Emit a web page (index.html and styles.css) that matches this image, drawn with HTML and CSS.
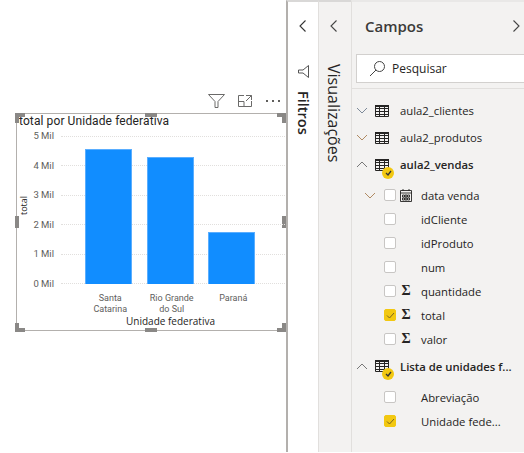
FILE: index.html
```html
<!DOCTYPE html>
<html>

<head>
    <meta charset="utf-8" />
    <title>Campos</title>
    <link rel="stylesheet" href="styles.css">
</head>

<body>

<div class="app">
    <div class="canvas">
        <div class="tools">
            <svg width="17" height="14" viewBox="0 0 17 14"><path d="M.5.500h16L10 7.500v6H7v-6z" fill="none" stroke="#6b6a69"/></svg>
            <svg width="14" height="12" viewBox="0 0 14 12"><path d="M6 .5H.5v11h13V6M.5 6.500H6v5M8 .5h5.500V5M13.500 .5L8 6" fill="none" stroke="#6b6a69"/></svg>
            <div class="dots"><span></span><span></span><span></span></div>
        </div>
        <div class="visual">
            <i class="hd h1"></i><i class="hd h2"></i><i class="hd h3"></i><i class="hd h4"></i>
            <i class="hd h5"></i><i class="hd h6"></i><i class="hd h7"></i><i class="hd h8"></i>
            <i class="hd mt"></i><i class="hd mb"></i><i class="hd ml"></i><i class="hd mr"></i>
            <div class="vtitle">total por Unidade federativa</div>
            <div class="plot">
                <div class="ytitle">total</div>
                <div class="yaxis">
                    <span>5 Mil</span><span>4 Mil</span><span>3 Mil</span><span>2 Mil</span><span>1 Mil</span><span>0 Mil</span>
                </div>
                <div class="bars">
                    <div class="grid"><i></i><i></i><i></i><i></i><i></i><i></i></div>
                    <div class="bar" style="height: 135px"></div>
                    <div class="bar" style="height: 127px"></div>
                    <div class="bar" style="height: 52px"></div>
                </div>
            </div>
            <div class="xaxis">
                <span>Santa<br>Catarina</span><span>Rio Grande<br>do Sul</span><span>Paraná</span>
            </div>
            <div class="xtitle">Unidade federativa</div>
        </div>
    </div>

    <div class="side filtros">
        <svg class="chev" width="7" height="12" viewBox="0 0 7 12"><path d="M6.500.5L1 6l5.500 5.500" fill="none" stroke="#333" stroke-width="1.100"/></svg>
        <svg class="funnel" width="11" height="13" viewBox="0 0 11 13"><path d="M10.500.5v12L5 8H.5V5H5z" fill="none" stroke="#555"/></svg>
        <div class="vtext bold">Filtros</div>
    </div>

    <div class="side viz">
        <svg class="chev" width="7" height="12" viewBox="0 0 7 12"><path d="M6.500.5L1 6l5.500 5.500" fill="none" stroke="#444" stroke-width="1.100"/></svg>
        <div class="vtext">Visualizações</div>
    </div>

    <div class="campos">
        <div class="chead">
            <span class="ctitle">Campos</span>
            <svg width="7" height="12" viewBox="0 0 7 12"><path d="M.5.5L6 6 .5 11.500" fill="none" stroke="#444" stroke-width="1.100"/></svg>
        </div>
        <div class="search">
            <svg width="17" height="17" viewBox="0 0 17 17"><circle cx="10.500" cy="6.500" r="5" fill="none" stroke="#444"/><path d="M7 10l-6 6" stroke="#444" fill="none"/></svg>
            <span>Pesquisar</span>
        </div>
        <div class="tree">
            <div class="row table h27">
                <svg class="ex" width="12" height="7" viewBox="0 0 12 7"><path d="M1 1l5 5 5-5" fill="none" stroke="#7d8a99"/></svg>
                <svg class="tb" width="14" height="12" viewBox="0 0 14 12"><use href="#tableicon"/></svg>
                <span>aula2_clientes</span>
            </div>
            <div class="row table h27">
                <svg class="ex" width="12" height="7" viewBox="0 0 12 7"><path d="M1 1l5 5 5-5" fill="none" stroke="#b08a62"/></svg>
                <svg class="tb" width="14" height="12" viewBox="0 0 14 12"><use href="#tableicon"/></svg>
                <span>aula2_produtos</span>
            </div>
            <div class="row table h27 vendas">
                <svg class="ex" width="12" height="7" viewBox="0 0 12 7"><path d="M1 6l5-5 5 5" fill="none" stroke="#777"/></svg>
                <div class="tbwrap">
                    <svg class="tb" width="14" height="12" viewBox="0 0 14 12"><use href="#tableicon"/></svg>
                    <div class="badge"><svg width="7" height="6" viewBox="0 0 7 6"><path d="M1 3l2 2 3-4" fill="none" stroke="#333" stroke-width="1.300"/></svg></div>
                </div>
                <span class="bold">aula2_vendas</span>
            </div>
            <div class="row field first">
                <svg class="subex" width="12" height="7" viewBox="0 0 12 7"><path d="M1 1l5 5 5-5" fill="none" stroke="#b08a62"/></svg>
                <div class="check"></div>
                <div class="ficon"><svg width="12" height="13" viewBox="0 0 12 13"><path d="M.5 1.500h11v11H.5zM.5 4h11M3 0v2M9 0v2M2.500 6h2v2h-2zM5 6h2v2H5zM7.500 6h2v2h-2zM2.500 9h2v2h-2zM5 9h2v2H5zM7.500 9h2v2h-2z" fill="none" stroke="#252423" stroke-width=".9"/></svg></div>
                <span>data venda</span>
            </div>
            <div class="row field"><div class="check"></div><div class="ficon"></div><span>idCliente</span></div>
            <div class="row field"><div class="check"></div><div class="ficon"></div><span>idProduto</span></div>
            <div class="row field"><div class="check"></div><div class="ficon"></div><span>num</span></div>
            <div class="row field"><div class="check"></div><div class="ficon sigma">Σ</div><span>quantidade</span></div>
            <div class="row field">
                <div class="check on"><svg width="9" height="7" viewBox="0 0 9 7"><path d="M1 3.500l2.500 2.500L8 1" fill="none" stroke="#7a6520"/></svg></div>
                <div class="ficon sigma">Σ</div><span>total</span>
            </div>
            <div class="row field"><div class="check"></div><div class="ficon sigma">Σ</div><span>valor</span></div>
            <div class="row table h30">
                <svg class="ex" width="12" height="7" viewBox="0 0 12 7"><path d="M1 6l5-5 5 5" fill="none" stroke="#777"/></svg>
                <div class="tbwrap">
                    <svg class="tb" width="14" height="12" viewBox="0 0 14 12"><use href="#tableicon"/></svg>
                    <div class="badge"><svg width="7" height="6" viewBox="0 0 7 6"><path d="M1 3l2 2 3-4" fill="none" stroke="#333" stroke-width="1.300"/></svg></div>
                </div>
                <span class="bold">Lista de unidades f...</span>
            </div>
            <div class="row field"><div class="check"></div><div class="ficon"></div><span>Abreviação</span></div>
            <div class="row field">
                <div class="check on"><svg width="9" height="7" viewBox="0 0 9 7"><path d="M1 3.500l2.500 2.500L8 1" fill="none" stroke="#7a6520"/></svg></div>
                <div class="ficon"></div><span>Unidade fede...</span>
            </div>
        </div>
    </div>
</div>

<svg class="defs" width="0" height="0">
    <symbol id="tableicon" viewBox="0 0 14 12">
        <path d="M.5.500h13v11H.5z" fill="none" stroke="#252423"/>
        <path d="M0 3.500h14M0 6.500h14M0 9.500h14M4.500 2v10M9.500 2v10" stroke="#252423" fill="none"/>
        <path d="M0 0h14v2H0z" fill="#252423"/>
    </symbol>
</svg>

</body>

</html>
```

FILE: styles.css
```css
* {
    padding: 0;
    margin: 0;
    box-sizing: border-box;
}

body {
    width: 524px;
    height: 453px;
    overflow: hidden;
    background: #fff;
    font-family: "Open Sans", "Liberation Sans", sans-serif;
    color: #252423;
}

.app {
    display: flex;
    height: 452px;
}

.defs {
    position: absolute;
}

/* canvas */
.canvas {
    width: 286px;
    flex: none;
    padding: 93px 0 0 16px;
    background: #fff;
}

.tools {
    display: flex;
    justify-content: flex-end;
    align-items: center;
    gap: 13px;
    height: 16px;
    margin-bottom: 4px;
    padding-right: 6px;
    width: 270px;
}

.dots {
    display: flex;
    gap: 4px;
    margin-left: 1px;
}

.dots span {
    width: 2px;
    height: 2px;
    background: #605e5c;
}

.visual {
    position: relative;
    z-index: 1;
    width: 271px;
    height: 218px;
    border: 1px solid #b3b0ad;
    padding: 0 0 0 2px;
}

.hd {
    position: absolute;
    background: #8a8886;
}

.h1 { left: -2px; top: -1px; width: 10px; height: 4px; }
.h2 { left: -2px; top: -1px; width: 4px; height: 10px; }
.h3 { right: 0; top: -1px; width: 9px; height: 4px; }
.h4 { right: 0; top: -1px; width: 4px; height: 10px; }
.h5 { left: -2px; bottom: -2px; width: 10px; height: 4px; }
.h6 { left: -2px; bottom: -2px; width: 4px; height: 9px; }
.h7 { right: 0; bottom: -2px; width: 9px; height: 4px; }
.h8 { right: 0; bottom: -2px; width: 4px; height: 9px; }
.mt { left: 128px; top: -1px; width: 12px; height: 4px; }
.mb { left: 128px; bottom: -2px; width: 12px; height: 4px; }
.ml { left: -2px; top: 102px; width: 4px; height: 12px; }
.mr { right: 0; top: 102px; width: 4px; height: 12px; }

.vtitle {
    font-family: "Roboto", sans-serif;
    font-size: 12px;
    line-height: 14px;
    letter-spacing: .1px;
    color: #252423;
}

.plot {
    display: flex;
    align-items: flex-start;
    height: 162px;
}

.ytitle {
    writing-mode: vertical-rl;
    transform: rotate(180deg);
    font-size: 9px;
    line-height: 10px;
    width: 10px;
    height: 154px;
    text-align: center;
}

.yaxis {
    width: 25px;
    height: 162px;
    padding-top: 1px;
    display: flex;
    flex-direction: column;
    justify-content: space-between;
    text-align: right;
    font-family: "Roboto", sans-serif;
    font-size: 9.500px;
    line-height: 13px;
    color: #605e5c;
}

.bars {
    position: relative;
    display: flex;
    align-items: flex-end;
    gap: 14.500px;
    width: 224px;
    height: 148px;
    padding: 0 0 0 24px;
    margin-left: 7px;
    margin-top: 8px;
}

.grid {
    position: absolute;
    left: 0;
    top: 0;
    width: 224px;
    height: 148px;
    display: flex;
    flex-direction: column;
    justify-content: space-between;
}

.grid i {
    display: block;
    border-top: 1px dotted #e1dfdd;
}

.bar {
    position: relative;
    width: 47px;
    background: #118dff;
    border: 1px solid #5aaeff;
    border-bottom: 0;
}

.xaxis {
    display: flex;
    padding-left: 60.500px;
    margin-top: 3px;
    font-family: "Roboto", sans-serif;
    font-size: 9px;
    line-height: 11px;
    text-align: center;
    color: #605e5c;
    height: 22px;
}

.xaxis span {
    width: 61.500px;
}

.xtitle {
    font-size: 10px;
    line-height: 12px;
    text-align: center;
    padding-left: 63px;
    width: 240px;
}

/* side panes */
.side {
    border-top: 2px solid #d9d8d7;
    padding-top: 18px;
    display: flex;
    flex-direction: column;
    align-items: center;
    flex: none;
}

.filtros {
    width: 32px;
    background: #fff;
    border-left: 2px solid #b3b0ad;
}

.viz {
    width: 33px;
    background: #f3f2f1;
    border-left: 1px solid #e1dfdd;
}

.chev {
    margin-right: 1px;
}

.viz .chev {
    margin-right: 3px;
}

.funnel {
    margin-top: 33px;
    margin-bottom: 13px;
}

.filtros .vtext {
    font-size: 14.500px;
}

.viz .vtext {
    margin-top: 32px;
    margin-right: 2px;
    font-size: 16px;
}

.vtext {
    writing-mode: vertical-rl;
    line-height: 16px;
    color: #252423;
}

.bold {
    font-weight: 600;
}

/* campos */
.campos {
    width: 173px;
    flex: none;
    background: #f3f2f1;
    border-left: 1px solid #e1dfdd;
    border-top: 2px solid #e9e8e7;
}

.chead {
    display: flex;
    justify-content: space-between;
    align-items: center;
    height: 52px;
    padding: 0 4px 4px 13px;
}

.ctitle {
    font-size: 15px;
    font-weight: 600;
    color: #3b3a39;
}

.search {
    display: flex;
    align-items: center;
    gap: 6px;
    height: 29px;
    margin-left: 4px;
    padding-left: 12px;
    background: #fff;
    border: 1px solid #d2d0ce;
    border-right: 0;
    font-size: 12px;
}

.tree {
    border-top: 1px solid #e1dfdd;
    margin-top: 5px;
    padding-top: 8px;
}

.row {
    display: flex;
    align-items: center;
    font-size: 11.300px;
    white-space: nowrap;
}

.table {
    padding-left: 4px;
}

.h27 { height: 27px; }
.vendas { margin-bottom: 5px; }
.h30 { height: 30px; margin-bottom: 4px; }

.ex {
    margin-right: 7px;
}

.tb {
    display: block;
}

.table > .tb,
.tbwrap {
    margin-right: 11px;
}

.tbwrap {
    position: relative;
    flex: none;
}

.badge {
    position: absolute;
    left: 7px;
    top: 8px;
    width: 12px;
    height: 12px;
    border-radius: 50%;
    background: #f2c811;
    display: flex;
    align-items: center;
    justify-content: center;
}

.field {
    height: 24px;
    padding-left: 32px;
}

.field.first {
    padding-left: 12px;
}

.subex {
    margin-right: 8px;
}

.check {
    width: 12px;
    height: 12px;
    border: 1px solid #c8c6c4;
    background: #fff;
    border-radius: 2px;
    margin-right: 4px;
    display: flex;
    align-items: center;
    justify-content: center;
}

.check.on {
    background: #f2c811;
    border-color: #f2c811;
}

.ficon {
    width: 12px;
    margin-right: 9px;
    display: flex;
    justify-content: center;
}

.sigma {
    font-size: 14px;
    font-weight: 700;
    font-family: "Liberation Serif", serif;
    line-height: 14px;
}
```
